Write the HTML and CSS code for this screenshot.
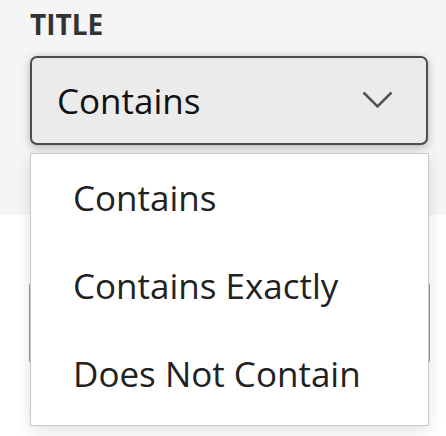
FILE: index.html
```html
<!DOCTYPE html>
<html>
<head>
<meta charset="utf-8">
<link rel="stylesheet" href="styles.css">
</head>
<body>
<div class="page">
  <div class="top">
    <div class="label">TITLE</div>
    <div class="select">
      <span class="value">Contains</span>
      <svg class="chevron" width="31" height="18" viewBox="0 0 31 18"><path d="M1.5 1.5 L15.5 15.5 L29.5 1.5" fill="none" stroke="#555" stroke-width="2.6"/></svg>
    </div>
  </div>
  <div class="lower">
    <div class="input"></div>
  </div>
  <ul class="menu">
    <li class="item">Contains</li>
    <li class="item">Contains Exactly</li>
    <li class="item">Does Not Contain</li>
  </ul>
</div>
</body>
</html>
```
FILE: styles.css
```css
html, body {
  margin: 0;
  padding: 0;
  background: #ffffff;
}
body {
  font-family: "Open Sans", "Noto Sans", sans-serif;
  width: 446px;
  height: 436px;
  overflow: hidden;
}
.page {
  position: relative;
  height: 436px;
}
.top {
  background: #f5f5f5;
  height: 215px;
  padding: 8px 18px 0 30px;
  box-sizing: border-box;
}
.label {
  font-weight: 700;
  font-size: 28px;
  line-height: 32px;
  color: #333333;
}
.select {
  margin-top: 16px;
  width: 398px;
  height: 89px;
  box-sizing: border-box;
  border: 2px solid #4d4d4d;
  border-radius: 7px;
  background: #ebebeb;
  box-shadow: 0 2px 8px rgba(0, 0, 0, 0.28);
  display: flex;
  align-items: center;
  justify-content: space-between;
  padding: 0 33px 0 25px;
}
.value {
  font-size: 35px;
  color: #111111;
  line-height: 40px;
}
.chevron {
  display: block;
  margin-top: -2px;
}
.lower {
  padding: 68px 16px 0 29px;
}
.input {
  width: 401px;
  height: 80px;
  box-sizing: border-box;
  border: 2px solid #9a9a9a;
  border-radius: 3px;
}
.menu {
  position: absolute;
  left: 30px;
  top: 153px;
  width: 399px;
  height: 273px;
  margin: 0;
  padding: 0;
  list-style: none;
  box-sizing: border-box;
  background: #ffffff;
  border: 1px solid #c8c8c8;
  box-shadow: 0 4px 14px rgba(0, 0, 0, 0.12);
}
.item {
  height: 89px;
  line-height: 89px;
  padding-left: 42px;
  font-size: 35px;
  color: #222222;
  margin-top: -1px;
}
```
